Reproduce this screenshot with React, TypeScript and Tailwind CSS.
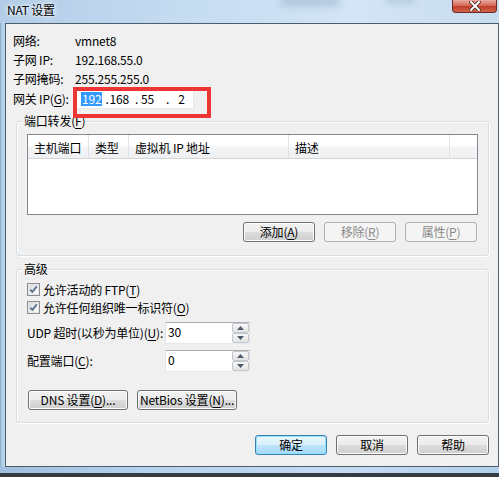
import React from "react";

const FONT = '"Noto Sans CJK SC", "Noto Sans", sans-serif';

function Mn({ t, k, after }: { t: string; k: string; after?: string }) {
  return (
    <span className="whitespace-nowrap">
      {t}(<span className="underline underline-offset-[2px]">{k}</span>){after ?? ""}
    </span>
  );
}

function Btn({
  children,
  kind,
  w,
}: {
  children: React.ReactNode;
  kind: "normal" | "disabled" | "primary";
  w: "w-[72px]" | "w-[100px]";
}) {
  const cls =
    kind === "primary"
      ? "border-[#3c7fb1] bg-[linear-gradient(#eaf6fd_0%,#d9f0fc_50%,#bee6fd_50%,#a7d9f5_100%)] shadow-[inset_0_0_0_1px_#8fe3ff] text-black"
      : kind === "disabled"
      ? "border-[#adb2b5] bg-[#f4f4f4] text-[#8a8a8a]"
      : "border-[#707070] bg-[linear-gradient(#f2f2f2_0%,#ebebeb_50%,#dddddd_50%,#cfcfcf_100%)] shadow-[inset_0_0_0_1px_#fcfcfc] text-black";
  return (
    <div
      className={`${w} h-[20px] shrink-0 rounded-[3px] border flex items-center justify-center text-[12px] leading-none whitespace-nowrap ${cls}`}
    >
      {children}
    </div>
  );
}

function Check({ label }: { label: React.ReactNode }) {
  return (
    <div className="flex items-center h-[13px]">
      <div className="w-[13px] h-[13px] border border-[#8e8f8f] bg-[#f4f4f4] flex items-center justify-center shrink-0">
        <div className="w-[11px] h-[11px] bg-[linear-gradient(135deg,#dcdcdc,#fbfbfb)] border border-[#e6e6e6] flex items-center justify-center">
          <svg width="9" height="9" viewBox="0 0 9 9">
            <path d="M1.2 4.6 L3.4 6.9 L7.8 1.4" fill="none" stroke="#5a6f90" strokeWidth="1.7" />
          </svg>
        </div>
      </div>
      <span className="ml-[3px] text-[12px] leading-none text-black whitespace-nowrap">{label}</span>
    </div>
  );
}

function SpinInput({ value }: { value: string }) {
  return (
    <div className="w-[85px] h-[22px] shrink-0 border border-[#abadb3] border-r-[#dbdfe6] border-b-[#e3e9ef] border-l-[#e2e3ea] bg-white flex">
      <div className="flex-1 pl-[2px] pt-[2px] text-[12px] leading-[14px] text-black">{value}</div>
      <div className="w-[17px] flex flex-col">
        <div className="h-[10px] border border-[#c3c6cb] rounded-[2px] bg-[linear-gradient(#f7f7f7,#e4e4e4)] flex items-center justify-center">
          <svg width="7" height="4" viewBox="0 0 7 4">
            <path d="M0 4 L3.5 0 L7 4 Z" fill="#4d5a6c" />
          </svg>
        </div>
        <div className="h-[10px] border border-[#c3c6cb] rounded-[2px] bg-[linear-gradient(#f7f7f7,#e4e4e4)] flex items-center justify-center">
          <svg width="7" height="4" viewBox="0 0 7 4">
            <path d="M0 0 L3.5 4 L7 0 Z" fill="#4d5a6c" />
          </svg>
        </div>
      </div>
    </div>
  );
}

function Group({ label, h, children }: { label: string | React.ReactNode; h: "h-[135px]" | "h-[154px]"; children: React.ReactNode }) {
  return (
    <div
      className={`relative ml-[10px] w-[473px] ${h} border border-[#d5dfe5] rounded-[3px] shadow-[inset_1px_1px_0_#ffffff,1px_1px_0_#ffffff]`}
    >
      <span className="absolute left-[6px] -top-[8px] px-[1px] bg-[#f0f0f0] text-[12px] leading-[14px] text-black whitespace-nowrap">
        {label}
      </span>
      {children}
    </div>
  );
}

export default function App() {
  const cols = [
    { t: "主机端口", w: "w-[61px]" },
    { t: "类型", w: "w-[40px]" },
    { t: "虚拟机 IP 地址", w: "w-[160px]" },
    { t: "描述", w: "w-[161px]" },
  ];
  return (
    <div
      className="relative w-[499px] h-[477px] overflow-hidden bg-[#353b41] flex flex-col tracking-[-0.2px]"
      style={{ fontFamily: FONT }}
    >
      {/* title bar */}
      <div className="relative h-[23px] shrink-0 bg-[linear-gradient(to_right,#b3cde8,#c4dbf1_35%,#d3e5f6_70%,#c9ddf0)] flex items-center">
        <div className="absolute left-[280px] top-[-4px] w-[60px] h-[10px] rounded-full bg-[#9fb6cc] blur-[4px] opacity-70" />
        <div className="absolute left-[385px] top-[-4px] w-[30px] h-[8px] rounded-full bg-[#a9bfd3] blur-[3px] opacity-60" />
        <span className="relative ml-[7px] -mt-[3px] text-[12px] leading-none text-black whitespace-nowrap [text-shadow:0_0_6px_#ffffff,0_0_3px_#ffffff]">
          NAT 设置
        </span>
        <div className="absolute right-[2px] top-0 w-[45px] h-[13px] rounded-b-[4px] border border-t-0 border-[#6b2b23] bg-[linear-gradient(#e9a99e,#d66b5a_45%,#c23d28_55%,#d2664f)] flex items-center justify-center">
          <svg width="12" height="10" viewBox="0 0 12 10">
            <path d="M2 1 L10 9 M10 1 L2 9" stroke="#4a2420" strokeWidth="3.6" strokeLinecap="square" />
            <path d="M2 1 L10 9 M10 1 L2 9" stroke="#ffffff" strokeWidth="2" strokeLinecap="square" />
          </svg>
        </div>
      </div>

      {/* middle: left frame + client */}
      <div className="flex h-[444px] shrink-0">
        <div className="w-[5px] bg-[linear-gradient(to_right,#8aa9c9,#b5d0ec_40%,#bdd6ef)]" />
        <div className="w-[494px] h-[444px] border border-[#4e5d6c] bg-[#f0f0f0] text-[12px] text-black flex flex-col">
          {/* info rows */}
          <div className="pt-[7px] pl-[7px] flex flex-col whitespace-nowrap">
            <div className="h-[19px] flex items-center">
              <span className="w-[62px] shrink-0">网络:</span>
              <span>vmnet8</span>
            </div>
            <div className="h-[19px] flex items-center">
              <span className="w-[62px] shrink-0">子网 IP:</span>
              <span>192.168.55.0</span>
            </div>
            <div className="h-[19px] flex items-center">
              <span className="w-[62px] shrink-0">子网掩码:</span>
              <span>255.255.255.0</span>
            </div>
            <div className="mt-[1px] h-[20px] flex items-center">
              <span className="w-[63px] shrink-0">
                网关 IP(<span className="underline underline-offset-[2px]">G</span>):
              </span>
              <div className="w-[118px] h-[20px] bg-white border-r border-b border-[#e3e9ef] flex items-center text-[12px] leading-none">
                <span className="ml-[5px] px-[1px] h-[14px] flex items-center bg-[#3399ff] text-white">192</span>
                <span className="ml-[3px]">.</span>
                <span className="ml-[1px]">168</span>
                <span className="ml-[6px]">.</span>
                <span className="ml-[3px]">55</span>
                <span className="ml-[12px]">.</span>
                <span className="ml-[9px]">2</span>
              </div>
            </div>
          </div>

          {/* port forwarding group */}
          <div className="mt-[12px]">
            <Group label={<Mn t="端口转发" k="F" />} h="h-[135px]">
              <div className="pt-[12px] pl-[10px] pr-[11px] flex flex-col">
                <div className="w-[451px] h-[81px] border border-[#828790] bg-white flex flex-col">
                  <div className="h-[24px] flex border-b border-[#d5d5d5] bg-[linear-gradient(#ffffff_0%,#ffffff_45%,#f3f4f6_55%,#eff0f2_100%)]">
                    {cols.map((c) => (
                      <div
                        key={c.t}
                        className={`${c.w} h-full border-r border-[#dfe2e6] flex items-center pl-[6px] pt-[2px] text-[12px] leading-none whitespace-nowrap`}
                      >
                        {c.t}
                      </div>
                    ))}
                    <div className="flex-1 h-full" />
                  </div>
                </div>
                <div className="mt-[7px] flex justify-end gap-[9px]">
                  <Btn kind="normal" w="w-[72px]">
                    <Mn t="添加" k="A" />
                  </Btn>
                  <Btn kind="disabled" w="w-[72px]">
                    <Mn t="移除" k="R" />
                  </Btn>
                  <Btn kind="disabled" w="w-[72px]">
                    <Mn t="属性" k="P" />
                  </Btn>
                </div>
              </div>
            </Group>
          </div>

          {/* advanced group */}
          <div className="mt-[13px]">
            <Group label="高级" h="h-[154px]">
              <div className="pt-[13px] pl-[10px] flex flex-col">
                <div className="flex flex-col gap-[5px]">
                  <Check label={<Mn t="允许活动的 FTP" k="T" />} />
                  <Check label={<Mn t="允许任何组织唯一标识符" k="O" />} />
                </div>
                <div className="mt-[8px] h-[22px] flex items-center">
                  <span className="w-[138px] shrink-0 whitespace-nowrap">
                    <Mn t="UDP 超时(以秒为单位)" k="U" after=":" />
                  </span>
                  <SpinInput value="30" />
                </div>
                <div className="mt-[6px] h-[22px] flex items-center">
                  <span className="w-[138px] shrink-0 whitespace-nowrap">
                    <Mn t="配置端口" k="C" after=":" />
                  </span>
                  <SpinInput value="0" />
                </div>
                <div className="mt-[18px] ml-[1px] flex gap-[9px]">
                  <Btn kind="normal" w="w-[100px]">
                    <Mn t="DNS 设置" k="D" after="..." />
                  </Btn>
                  <Btn kind="normal" w="w-[100px]">
                    <Mn t="NetBios 设置" k="N" after="..." />
                  </Btn>
                </div>
              </div>
            </Group>
          </div>

          {/* bottom buttons */}
          <div className="mt-[12px] pr-[9px] flex justify-end gap-[9px]">
            <Btn kind="primary" w="w-[72px]">确定</Btn>
            <Btn kind="normal" w="w-[72px]">取消</Btn>
            <Btn kind="normal" w="w-[72px]">帮助</Btn>
          </div>
        </div>
      </div>

      {/* bottom frame */}
      <div className="h-[6px] shrink-0 bg-[linear-gradient(to_right,#9fbfe0,#b7d2ee_30%,#c4dbf2_70%,#b3cfeb)]" />

      {/* red annotation box */}
      <div className="absolute left-[73px] top-[87px] w-[138px] h-[31px] border-[4px] border-[#ee3535]" />
    </div>
  );
}
